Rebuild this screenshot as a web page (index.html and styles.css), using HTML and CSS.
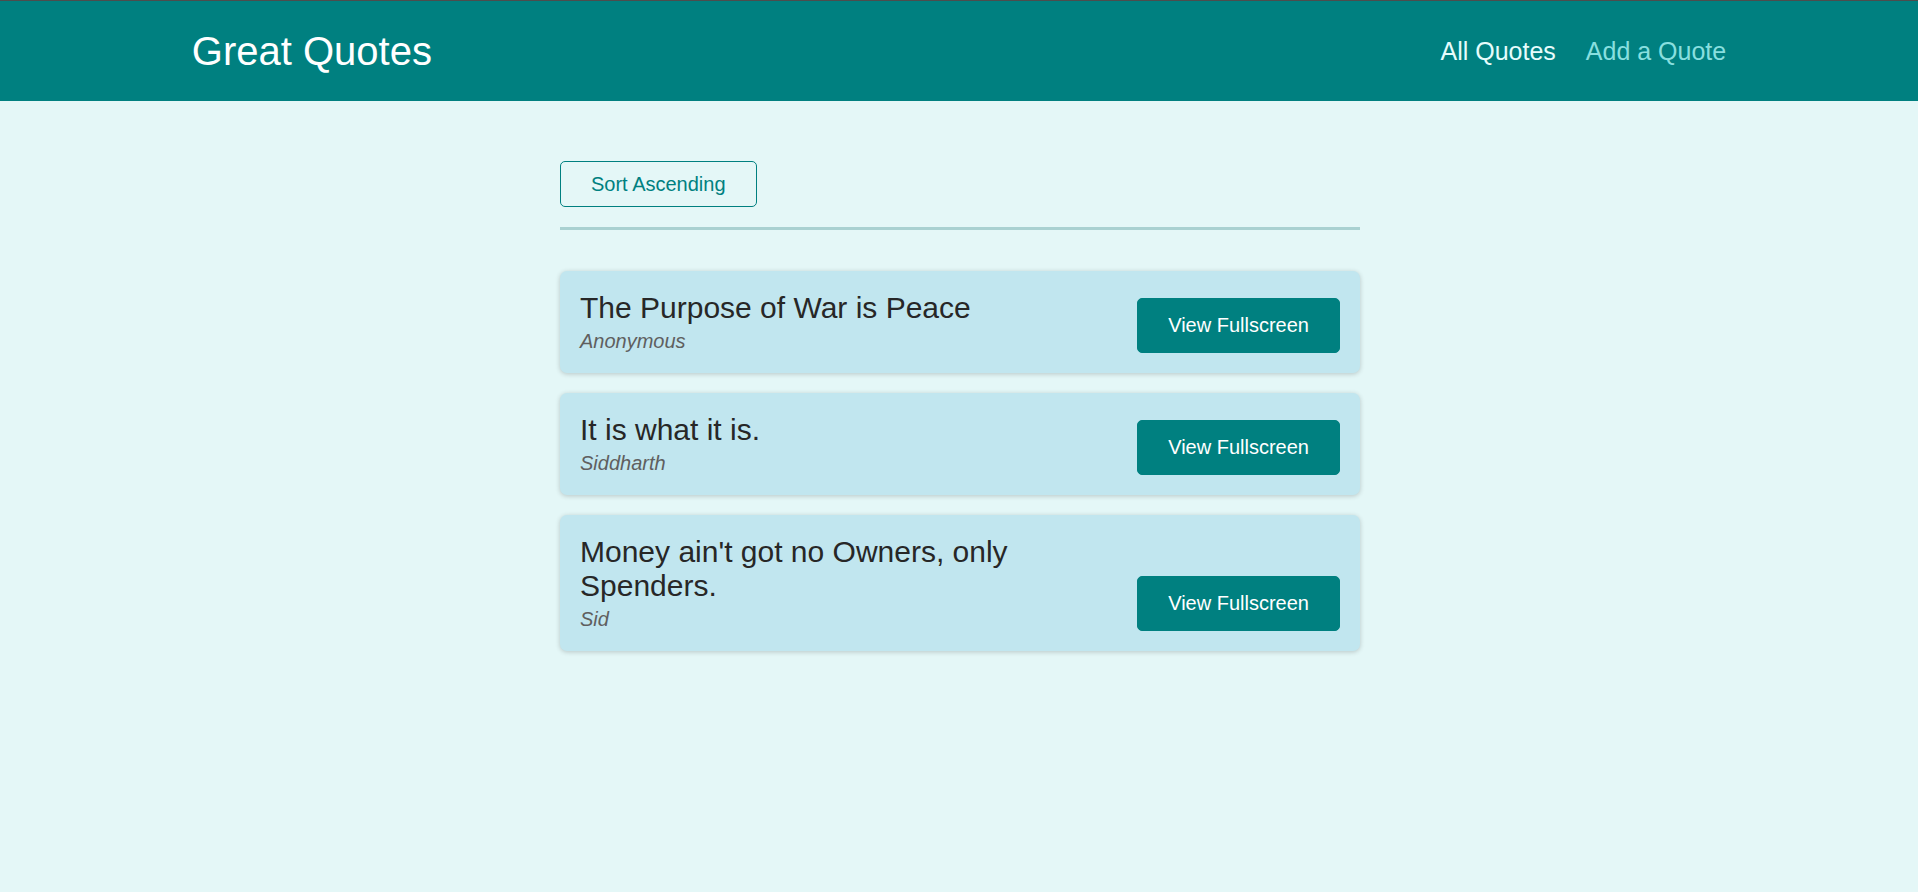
FILE: index.html
```html
<!DOCTYPE html>
<html lang="en">
<head>
<meta charset="utf-8">
<title>Great Quotes</title>
<link rel="stylesheet" href="styles.css">
</head>
<body>
<header class="header">
  <div class="logo">Great Quotes</div>
  <nav class="nav">
    <ul>
      <li><a class="active" href="#">All Quotes</a></li>
      <li><a href="#">Add a Quote</a></li>
    </ul>
  </nav>
</header>
<div class="page">
<main class="main">
  <div class="sorting">
    <button class="sort-btn">Sort Ascending</button>
  </div>
  <ul class="list">
    <li class="item">
      <figure class="fig">
        <blockquote class="quote">The Purpose of War is Peace</blockquote>
        <figcaption class="author">Anonymous</figcaption>
      </figure>
      <a class="btn" href="#">View Fullscreen</a>
    </li>
    <li class="item">
      <figure class="fig">
        <blockquote class="quote">It is what it is.</blockquote>
        <figcaption class="author">Siddharth</figcaption>
      </figure>
      <a class="btn" href="#">View Fullscreen</a>
    </li>
    <li class="item">
      <figure class="fig">
        <blockquote class="quote">Money ain't got no Owners, only Spenders.</blockquote>
        <figcaption class="author">Sid</figcaption>
      </figure>
      <a class="btn" href="#">View Fullscreen</a>
    </li>
  </ul>
</main>
</div>
</body>
</html>
```
FILE: styles.css
```css
* { box-sizing: border-box; }
html { font-family: "Liberation Sans", Arial, sans-serif; }
body {
  margin: 0;
  background-color: #e4f7f7;
  min-height: 892px;
}
.header {
  height: 101px;
  border-top: 1px solid #4d4d4d;
  background-color: #008080;
  display: flex;
  align-items: center;
  justify-content: space-between;
  padding: 0 10%;
}
.logo {
  font-size: 40px;
  color: #ffffff;
}
.nav ul {
  list-style: none;
  margin: 0;
  padding: 0;
  display: flex;
}
.nav li {
  margin-left: 30px;
  font-size: 25px;
}
.nav a {
  text-decoration: none;
  color: #88dfdf;
}
.nav a.active { color: #e6fcfc; }
.page {
  padding-left: 2px;
  overflow: hidden;
}
.main {
  margin: 60px auto;
  width: 90%;
  max-width: 800px;
}
.sorting {
  padding-bottom: 20px;
  border-bottom: 3px solid #a9d1d1;
  margin-bottom: 41px;
}
.sort-btn {
  font: inherit;
  font-size: 20px;
  line-height: 24px;
  background-color: transparent;
  border: 1px solid #008080;
  color: #008080;
  padding: 10px 30px;
  border-radius: 5px;
  display: block;
}
.list {
  list-style: none;
  margin: 0;
  padding: 0;
  display: flex;
  flex-direction: column;
  gap: 20px;
}
.item {
  display: flex;
  justify-content: space-between;
  align-items: flex-end;
  padding: 20px;
  border-radius: 7px;
  background-color: #c1e6ef;
  box-shadow: 0 1px 5px rgba(0, 0, 0, 0.2);
}
.fig {
  margin: 0;
  flex: 1;
  min-width: 0;
}
.quote {
  margin: 0 0 5px 0;
  font-size: 30px;
  color: #272727;
}
.author {
  font-size: 20px;
  font-style: italic;
  color: #5f5f5f;
}
.btn {
  flex-shrink: 0;
  text-decoration: none;
  font-size: 20px;
  color: #ffffff;
  background-color: #008080;
  border: 1px solid #008080;
  padding: 15px 30px;
  border-radius: 5px;
}
```
